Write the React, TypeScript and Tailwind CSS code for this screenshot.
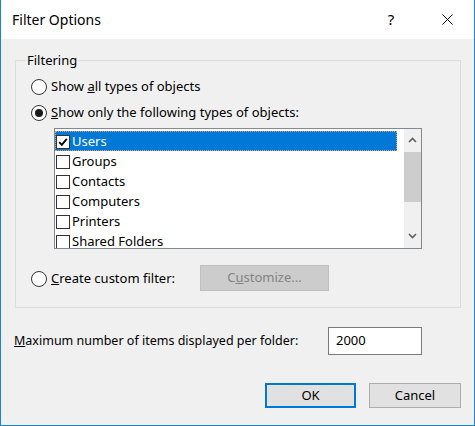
import React from "react"

const items = [
  { label: "Users", key: "U", checked: true, selected: true },
  { label: "Groups", checked: false },
  { label: "Contacts", checked: false },
  { label: "Computers", checked: false },
  { label: "Printers", checked: false },
  { label: "Shared Folders", checked: false },
]

function Radio({ on }: { on?: boolean }) {
  return (
    <span className="flex h-[16px] w-[16px] shrink-0 items-center justify-center rounded-full border border-[#333333] bg-white">
      {on && <span className="h-[8px] w-[8px] rounded-full bg-[#1a1a1a]" />}
    </span>
  )
}

function Check({ on }: { on?: boolean }) {
  return (
    <span className="flex h-[14px] w-[14px] shrink-0 items-center justify-center border border-[#333333] bg-white">
      {on && (
        <svg width="10" height="10" viewBox="0 0 10 10">
          <path d="M1.2 5.2 L3.8 7.8 L8.8 1.8" fill="none" stroke="#000" strokeWidth="1.8" />
        </svg>
      )}
    </span>
  )
}

function Chevron({ up }: { up?: boolean }) {
  return (
    <svg width="9" height="6" viewBox="0 0 9 6">
      <path
        d={up ? "M1 5 L4.5 1.5 L8 5" : "M1 1 L4.5 4.5 L8 1"}
        fill="none"
        stroke="#606060"
        strokeWidth="1.6"
      />
    </svg>
  )
}

export default function App() {
  return (
    <div className="flex h-[426px] w-[475px] flex-col border-x border-b border-[#1883d7] bg-[#f0f0f0] font-['Noto_Sans',sans-serif] text-[13px] text-black">
      {/* title bar */}
      <div className="flex h-[39px] shrink-0 items-center bg-white pl-[11px]">
        <span className="text-[14px]">Filter Options</span>
        <span className="ml-auto flex w-[60px] justify-center text-[15px]">?</span>
        <span className="flex w-[53px] justify-center">
          <svg width="11" height="11" viewBox="0 0 11 11">
            <path d="M0.5 0.5 L10.5 10.5 M10.5 0.5 L0.5 10.5" stroke="#000" strokeWidth="1" />
          </svg>
        </span>
      </div>

      <fieldset className="ml-[14px] mt-[12px] w-[446px] border border-[#dcdcdc] pb-[16px] pl-[15px]">
        <legend className="-ml-[5px] px-[1px] leading-[18px]">Filtering</legend>

        <label className="mt-[8px] flex h-[20px] items-center gap-[4px]">
          <Radio />
          <span>
            Show <span className="underline">a</span>ll types of objects
          </span>
        </label>

        <label className="mt-[6px] flex h-[20px] items-center gap-[4px]">
          <Radio on />
          <span>
            <span className="underline">S</span>how only the following types of objects:
          </span>
        </label>

        <div className="ml-[23px] mt-[5px] flex h-[121px] w-[368px] border border-[#828790] bg-white">
          <div className="flex-1 overflow-hidden pt-[2px]">
            {items.map((it) => (
              <div key={it.label} className="flex h-[20px] w-[342px] items-center">
                <div
                  className={
                    it.selected
                      ? "flex h-full w-full items-center gap-[2px] border border-dotted border-[#e0a060] bg-[#0078d7] pt-[2px] text-white"
                      : "flex h-full w-full items-center gap-[2px] pl-[1px] pt-[2px]"
                  }
                >
                  <Check on={it.checked} />
                  <span>{it.label}</span>
                </div>
              </div>
            ))}
          </div>
          <div className="flex w-[17px] flex-col bg-[#f0f0f0]">
            <div className="flex h-[22px] items-center justify-center">
              <Chevron up />
            </div>
            <div className="flex-1 pt-[1px]">
              <div className="h-[50px] bg-[#cdcdcd]" />
            </div>
            <div className="flex h-[24px] items-center justify-center">
              <Chevron />
            </div>
          </div>
        </div>

        <div className="mt-[16px] flex h-[26px] items-center">
          <label className="flex w-[169px] items-center gap-[4px] pt-[2px]">
            <Radio />
            <span>
              <span className="underline">C</span>reate custom filter:
            </span>
          </label>
          <div className="flex h-[26px] w-[129px] items-center justify-center border border-[#bfbfbf] bg-[#cccccc] text-[#838383]">
            C<span className="underline">u</span>stomize...
          </div>
        </div>
      </fieldset>

      <div className="mt-[19px] flex h-[28px] items-center pl-[13px]">
        <span className="w-[314px] text-[12.5px]">
          <span className="underline">M</span>aximum number of items displayed per folder:
        </span>
        <div className="flex h-[28px] w-[94px] items-center border border-[#7a7a7a] bg-white pl-[7px]">
          2000
        </div>
      </div>

      <div className="mt-[28px] flex justify-end gap-[13px] pr-[13px]">
        <button className="flex h-[25px] w-[91px] items-center justify-center border-2 border-[#0078d7] bg-[#e1e1e1]">
          OK
        </button>
        <button className="flex h-[25px] w-[92px] items-center justify-center border border-[#adadad] bg-[#e1e1e1]">
          Cancel
        </button>
      </div>
    </div>
  )
}
